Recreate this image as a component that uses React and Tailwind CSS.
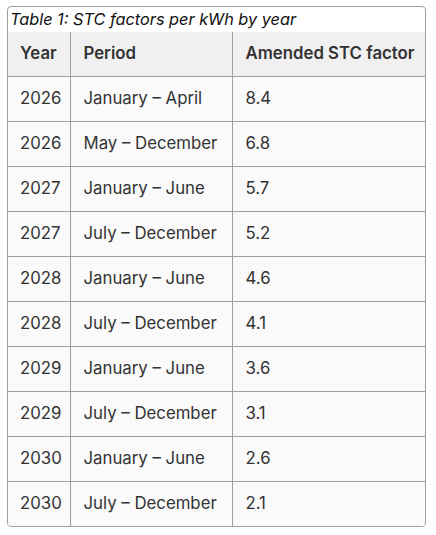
import React from 'react';

const rows = [
  ['2026', 'January – April', '8.4'],
  ['2026', 'May – December', '6.8'],
  ['2027', 'January – June', '5.7'],
  ['2027', 'July – December', '5.2'],
  ['2028', 'January – June', '4.6'],
  ['2028', 'July – December', '4.1'],
  ['2029', 'January – June', '3.6'],
  ['2029', 'July – December', '3.1'],
  ['2030', 'January – June', '2.6'],
  ['2030', 'July – December', '2.1'],
];

export default function App() {
  return (
    <div className="w-[436px] h-[535px] bg-white pt-[6px] pl-[7px]" style={{ fontFamily: 'Inter, "Open Sans", sans-serif' }}>
      <div className="w-[419px] border border-[#a0a0a0] rounded-[4px] overflow-hidden">
        <div className="h-[25px] px-[2px] italic text-[16.3px] leading-[25px] text-[#111]">
          Table 1: STC factors per kWh by year
        </div>
        <table className="w-full border-collapse table-fixed text-[16.8px] text-[#333]">
          <thead>
            <tr className="bg-[#f0f0f0] h-[44px]">
              <th className="w-[62px] pl-[12px] text-left font-semibold">Year</th>
              <th className="w-[162px] pl-[13px] text-left font-semibold border-l border-[#a0a0a0]">Period</th>
              <th className="pl-[13px] text-left font-semibold border-l border-[#a0a0a0]">Amended STC factor</th>
            </tr>
          </thead>
          <tbody>
            {rows.map((r, i) => (
              <tr key={i} className="bg-[#fafafa] h-[45px] border-t border-[#a0a0a0]">
                <td className="pl-[12px]">{r[0]}</td>
                <td className="pl-[13px] border-l border-[#a0a0a0]">{r[1]}</td>
                <td className="pl-[13px] border-l border-[#a0a0a0]">{r[2]}</td>
              </tr>
            ))}
          </tbody>
        </table>
      </div>
    </div>
  );
}
